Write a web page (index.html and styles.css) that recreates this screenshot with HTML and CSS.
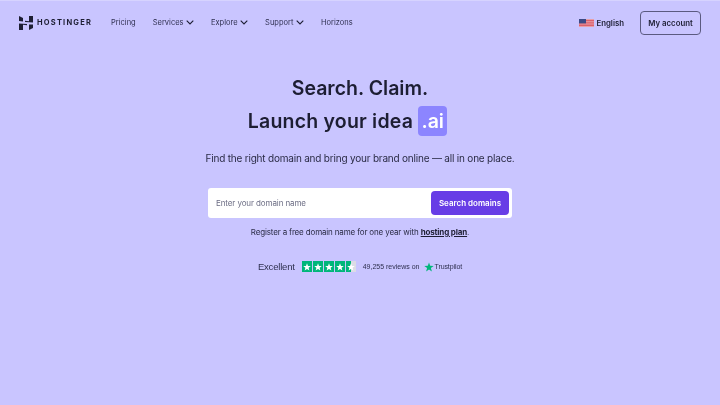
FILE: index.html
```html
<!DOCTYPE html>
<html lang="en">
<head>
<meta charset="utf-8">
<title>Hostinger</title>
<link rel="stylesheet" href="styles.css">
</head>
<body>
<header class="nav">
  <div class="nav-left">
    <a class="logo">
      <svg class="logo-mark" viewBox="0 0 14 14" width="14" height="14"><path d="M0 0l4 2v3.500L0 5zM10 0h4V6.600L6 6V4.800l4 .4zM0 7.400L8 8v1.200l-4-.4V14H0zM10 8.500h4V12l-4 2z" fill="#1d1e33"/></svg>
      <span class="logo-text">HOSTINGER</span>
    </a>
    <nav class="links">
      <a class="link">Pricing</a>
      <a class="link">Services<svg class="chev" viewBox="0 0 8 5"><path d="M.7.7L4 4l3.300-3.300" /></svg></a>
      <a class="link">Explore<svg class="chev" viewBox="0 0 8 5"><path d="M.7.7L4 4l3.300-3.300" /></svg></a>
      <a class="link">Support<svg class="chev" viewBox="0 0 8 5"><path d="M.7.7L4 4l3.300-3.300" /></svg></a>
      <a class="link">Horizons</a>
    </nav>
  </div>
  <div class="nav-right">
    <a class="lang">
      <svg class="flag" viewBox="0 0 15 8"><rect width="15" height="8" fill="#e8a0a8"/><rect y="1.200" width="15" height="1" fill="#d8525f"/><rect y="3.400" width="15" height="1" fill="#d8525f"/><rect y="5.600" width="15" height="1.200" fill="#d8525f"/><rect width="7" height="4.400" fill="#3c4a86"/></svg>
      English
    </a>
    <a class="account">My account</a>
  </div>
</header>
<main class="hero">
  <h1 class="title">
    <span class="title-line">Search. Claim.</span>
    <span class="title-line title-line-offset">Launch your idea <span class="tld">.ai</span></span>
  </h1>
  <p class="sub">Find the right domain and bring your brand online — all in one place.</p>
  <form class="search">
    <span class="placeholder">Enter your domain name</span>
    <span class="search-btn">Search domains</span>
  </form>
  <p class="note">Register a free domain name for one year with <a class="note-link">hosting plan</a>.</p>
  <div class="trust">
    <span class="excellent">Excellent</span>
    <span class="stars">
      <span class="star"><svg viewBox="0 0 10 10"><path d="M5 1.200l1 2.700 2.800.1-2.200 1.800.8 2.800L5 7l-2.400 1.600.8-2.800L1.200 4l2.800-.1z"/></svg></span>
      <span class="star"><svg viewBox="0 0 10 10"><path d="M5 1.200l1 2.700 2.800.1-2.200 1.800.8 2.800L5 7l-2.400 1.600.8-2.800L1.200 4l2.800-.1z"/></svg></span>
      <span class="star"><svg viewBox="0 0 10 10"><path d="M5 1.200l1 2.700 2.800.1-2.200 1.800.8 2.800L5 7l-2.400 1.600.8-2.800L1.200 4l2.800-.1z"/></svg></span>
      <span class="star"><svg viewBox="0 0 10 10"><path d="M5 1.200l1 2.700 2.800.1-2.200 1.800.8 2.800L5 7l-2.400 1.600.8-2.800L1.200 4l2.800-.1z"/></svg></span>
      <span class="star star-half"><svg viewBox="0 0 10 10"><path d="M5 1.200l1 2.700 2.800.1-2.200 1.800.8 2.800L5 7l-2.400 1.600.8-2.800L1.200 4l2.800-.1z"/></svg></span>
    </span>
    <span class="reviews">49,255 reviews on</span>
    <span class="tp"><svg class="tp-star" viewBox="0 0 10 10"><path d="M5 .5l1.200 3.300 3.500.1-2.800 2.200 1 3.400L5 7.500 2.100 9.500l1-3.400L.3 3.900l3.500-.1z"/></svg>Trustpilot</span>
  </div>
</main>
</body>
</html>
```
FILE: styles.css
```css
* { box-sizing: border-box; }
html, body { margin: 0; height: 100%; }
body {
  width: 720px;
  height: 405px;
  overflow: hidden;
  background: #c9c5ff;
  color: #1d1e33;
  font-family: "Inter", "Liberation Sans", sans-serif;
  border-top: 1px solid #d6d3ff;
}
.nav, .hero { filter: blur(0.3px); }
.nav {
  height: 44px;
  padding: 0 19px;
  display: flex;
  align-items: center;
  justify-content: space-between;
}
.nav-left { display: flex; align-items: center; gap: 19px; }
.logo { display: flex; align-items: center; gap: 4px; }
.logo-text { font-size: 7.500px; font-weight: 700; letter-spacing: 1.200px; padding-bottom: 1px; }
.links { display: flex; align-items: center; gap: 17px; padding-bottom: 1px; }
.link {
  display: flex;
  align-items: center;
  gap: 2.500px;
  font-size: 7.500px;
  color: #2f3050;
}
.chev { width: 8px; height: 5px; fill: none; stroke: #1d1e33; stroke-width: 1.100; }
.nav-right { display: flex; align-items: center; gap: 16px; }
.lang { display: flex; align-items: center; gap: 2px; font-size: 7.800px; font-weight: 600; padding-bottom: 1px; }
.flag { width: 15px; height: 8px; }
.account {
  width: 61px;
  height: 24px;
  padding-bottom: 1px;
  border: 1px solid #5b5a80;
  border-radius: 4px;
  display: flex;
  align-items: center;
  justify-content: center;
  font-size: 7.800px;
  font-weight: 600;
}
.hero { display: flex; flex-direction: column; align-items: center; }
.title { margin: 27px 0 0; font-size: 19.500px; font-weight: 600; line-height: 33px; display: flex; flex-direction: column; align-items: center; }
.title-line { display: flex; align-items: center; white-space: pre; }
.title-line-offset { margin-right: 25px; letter-spacing: 0.2px; }
.tld {
  width: 29px;
  height: 30px;
  margin-top: -1px;
  border-radius: 4px;
  background: #8c85ff;
  color: #fff;
  letter-spacing: 0;
  display: flex;
  align-items: center;
  justify-content: center;
}
.sub { margin: 12px 0 0; font-size: 10px; letter-spacing: -0.2px; line-height: 16px; color: #2a2b45; }
.search {
  margin-top: 22px;
  width: 304px;
  height: 30px;
  padding: 3px 3px 3px 8px;
  background: #fff;
  border-radius: 3px;
  display: flex;
  align-items: center;
  justify-content: space-between;
}
.placeholder { font-size: 8px; letter-spacing: -0.1px; color: #6d6e85; }
.search-btn {
  width: 78px;
  height: 24px;
  background: #673de6;
  color: #fff;
  border-radius: 4px;
  display: flex;
  align-items: center;
  justify-content: center;
  font-size: 8px;
  font-weight: 600;
}
.note { margin: 9px 0 0; font-size: 8px; letter-spacing: -0.15px; line-height: 10px; color: #2a2b45; }
.note-link { font-weight: 700; text-decoration: underline; color: #1d1e33; }
.trust {
  margin-top: 24px;
  display: flex;
  align-items: center;
  font-family: "Liberation Sans", Arial, sans-serif;
  color: #2f3050;
}
.excellent { font-size: 9.500px; letter-spacing: -0.2px; margin-right: 7px; }
.stars { display: flex; gap: 1px; margin-right: 7px; }
.star { width: 10px; height: 11px; background: #00b67a; display: flex; align-items: center; }
.star svg { width: 10px; height: 10px; fill: #fff; }
.star-half { background: linear-gradient(90deg, #00b67a 45%, #dcdce6 45%); }
.reviews { font-size: 7px; margin-right: 4px; }
.tp { display: flex; align-items: center; gap: 1px; font-size: 7px; letter-spacing: -0.1px; }
.tp-star { width: 10px; height: 10px; fill: #00b67a; }
```
